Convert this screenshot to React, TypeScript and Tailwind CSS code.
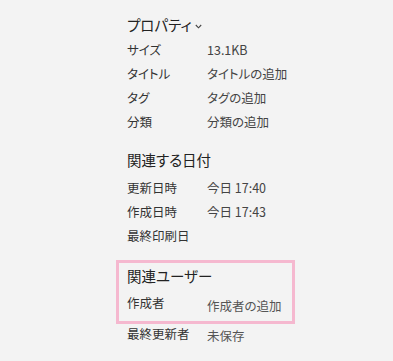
import React from 'react';

const font = "font-['Meiryo_UI','Noto_Sans_CJK_JP',sans-serif] [font-feature-settings:'palt']";

function Row({ label, value, valueClass = 'text-[#444]' }: { label: string; value?: string; valueClass?: string }) {
  return (
    <div className="flex h-[24px] items-center whitespace-nowrap text-[12.5px] leading-[24px]">
      <span className="w-[80px] text-[#333]">{label}</span>
      {value && <span className={valueClass}>{value}</span>}
    </div>
  );
}

function Chevron() {
  return (
    <svg width="7" height="5" viewBox="0 0 7 5" className="ml-[3px] mt-[3px]">
      <path d="M0.8 1 L3.5 3.8 L6.2 1" fill="none" stroke="#444" strokeWidth="1.1" />
    </svg>
  );
}

export default function App() {
  return (
    <div className={`min-h-[361px] w-[393px] bg-[#f3f3f3] pl-[116px] pt-[12px] ${font}`}>
      {/* プロパティ */}
      <section className="px-[11px]">
        <h2 className="mb-[1px] flex h-[25px] items-center text-[14.5px] leading-[25px] text-[#222]">
          プロパティ
          <Chevron />
        </h2>
        <Row label="サイズ" value="13.1KB" />
        <Row label="タイトル" value="タイトルの追加" />
        <Row label="タグ" value="タグの追加" />
        <Row label="分類" value="分類の追加" />
      </section>

      {/* 関連する日付 */}
      <section className="mt-[14px] px-[11px]">
        <h2 className="mb-[4px] h-[24px] text-[14.5px] leading-[24px] text-[#222]">関連する日付</h2>
        <Row label="更新日時" value="今日 17:40" />
        <Row label="作成日時" value="今日 17:43" />
        <Row label="最終印刷日" />
      </section>

      {/* 関連ユーザー */}
      <section className="mt-[12px] w-[179px] border-[3px] border-[#f5b8cf] pl-[8px] pt-[1px] pb-[6px]">
        <h2 className="h-[24px] text-[14.5px] leading-[24px] text-[#222]">関連ユーザー</h2>
        <div className="mt-[3px] flex h-[24px] items-start whitespace-nowrap text-[12.5px] leading-[24px]">
          <span className="w-[80px] text-[#333]">作成者</span>
          <span className="mt-[3px] text-[#555]">作成者の追加</span>
        </div>
      </section>
      <div className="flex h-[20px] items-start whitespace-nowrap px-[11px] text-[12.5px] leading-[20px]">
        <span className="w-[80px] text-[#333]">最終更新者</span>
        <span className="mt-[2px] text-[#555]">未保存</span>
      </div>
    </div>
  );
}
